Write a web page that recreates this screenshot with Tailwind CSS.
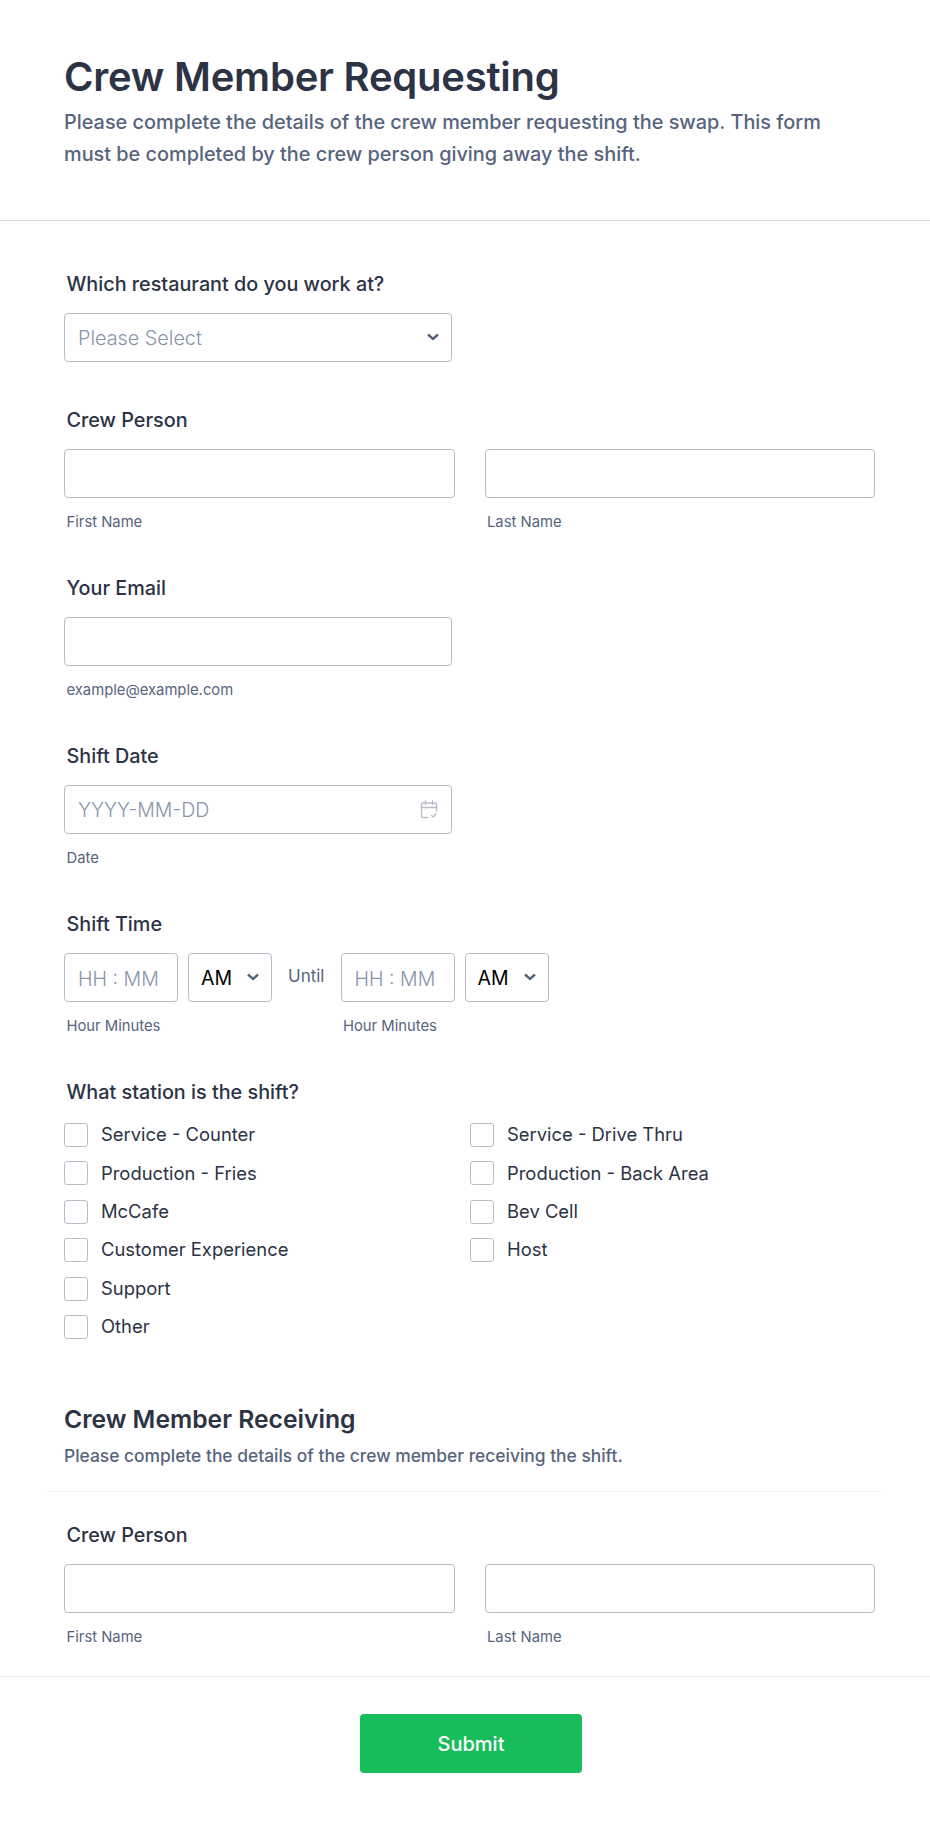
<!DOCTYPE html>
<html lang="en">
<head>
  <meta charset="UTF-8" />
  <meta name="viewport" content="width=device-width, initial-scale=1.0" />
  <title>Crew Member Requesting</title>
  <script src="https://cdn.jsdelivr.net/npm/@tailwindcss/browser@4"></script>
</head>
<body class="bg-white font-[Inter,sans-serif] text-[#2c3345]">

  <!-- Header -->
  <header class="pt-[53px] pb-[50px] px-16 border-b border-[#d8dae4]">
    <h1 class="text-[40px] leading-[48px] font-semibold tracking-[-0.23px]">Crew Member Requesting</h1>
    <p class="mt-[5px] w-[790px] text-[19.86px] leading-8 font-medium text-[#57647e]">Please complete the details of the crew member requesting the swap. This form must be completed by the crew person giving away the shift.</p>
  </header>

  <form class="px-16 pt-[51px]">
    <!-- Restaurant -->
    <label class="block pl-[2.5px] text-[19.8px] leading-6 font-medium">Which restaurant do you work at?</label>
    <div class="relative mt-[17px] w-[388px]">
      <select class="appearance-none block w-full h-[49px] pt-[2px] px-[13px] bg-white border border-[#b8bdc9] rounded text-[19.8px] font-light text-[#8894ab]">
        <option>Please Select</option>
      </select>
      <svg class="absolute right-[13px] top-[20px] w-3 h-2" viewBox="0 0 12 8" fill="none" stroke="#57647e" stroke-width="2.4"><path d="M1 1.5l5 4.5 5-4.5" /></svg>
    </div>

    <!-- Crew person -->
    <label class="block mt-[46px] pl-[2.5px] text-[19.8px] leading-6 font-medium">Crew Person</label>
    <div class="mt-[17px] flex gap-[30px] w-[811px]">
      <div class="flex-1">
        <input type="text" class="block w-full h-[49px] border border-[#b8bdc9] rounded" />
        <p class="mt-[14px] pl-[2.5px] text-[14.8px] leading-5 text-[#57647e]">First Name</p>
      </div>
      <div class="flex-1">
        <input type="text" class="block w-full h-[49px] border border-[#b8bdc9] rounded" />
        <p class="mt-[14px] pl-[2.5px] text-[14.8px] leading-5 text-[#57647e]">Last Name</p>
      </div>
    </div>

    <!-- Email -->
    <label class="block mt-[44px] pl-[2.5px] text-[19.8px] leading-6 font-medium">Your Email</label>
    <div class="mt-[17px] w-[388px]">
      <input type="email" class="block w-full h-[49px] border border-[#b8bdc9] rounded" />
      <p class="mt-[14px] pl-[2.5px] text-[14.8px] leading-5 text-[#57647e]">example@example.com</p>
    </div>

    <!-- Shift date -->
    <label class="block mt-[44px] pl-[2.5px] text-[19.8px] leading-6 font-medium">Shift Date</label>
    <div class="mt-[17px] w-[388px]">
      <div class="relative">
        <input type="text" placeholder="YYYY-MM-DD" class="block w-full h-[49px] px-[13px] border border-[#b8bdc9] rounded text-[19.5px] font-light placeholder:text-[#8894ab]" />
        <svg class="absolute right-[14px] top-[15px] w-[18px] h-[19px]" viewBox="0 0 18 19" fill="none" stroke="#b8bdc9" stroke-width="1.4" stroke-linecap="round" stroke-linejoin="round">
          <path d="M8 17.5H3A1.5 1.5 0 0 1 1.5 16V4.5A1.5 1.5 0 0 1 3 3h12a1.5 1.5 0 0 1 1.5 1.5V11" />
          <path d="M1.5 7.5h15M5.5 1v3.5M12.5 1v3.5" />
          <path d="M11.5 15.5l1.5 1.5 3-3.2" />
        </svg>
      </div>
      <p class="mt-[14px] pl-[2.5px] text-[14.8px] leading-5 text-[#57647e]">Date</p>
    </div>

    <!-- Shift time -->
    <label class="block mt-[44px] pl-[2.5px] text-[19.8px] leading-6 font-medium">Shift Time</label>
    <div class="mt-[17px] flex">
      <div class="w-[114px]">
        <input type="text" placeholder="HH : MM" class="block w-full h-[49px] pt-[2px] px-[13px] border border-[#b8bdc9] rounded text-[19.6px] font-light placeholder:text-[#8894ab]" />
        <p class="mt-[14px] pl-[2.5px] text-[14.8px] leading-5 whitespace-nowrap text-[#57647e]">Hour Minutes</p>
      </div>
      <div class="relative ml-[10px] w-[84px]">
        <select class="appearance-none block w-full h-[49px] pt-[3px] px-[12px] bg-white border border-[#b8bdc9] rounded text-[19.5px] text-black">
          <option>AM</option>
        </select>
        <svg class="absolute right-[13px] top-[20px] w-3 h-2" viewBox="0 0 12 8" fill="none" stroke="#57647e" stroke-width="2.4"><path d="M1 1.5l5 4.5 5-4.5" /></svg>
      </div>
      <span class="ml-[16px] mr-[16px] mt-[11px] text-[17px] leading-6 text-[#57647e]">Until</span>
      <div class="w-[114px]">
        <input type="text" placeholder="HH : MM" class="block w-full h-[49px] pt-[2px] px-[13px] border border-[#b8bdc9] rounded text-[19.6px] font-light placeholder:text-[#8894ab]" />
        <p class="mt-[14px] pl-[2.5px] text-[14.8px] leading-5 whitespace-nowrap text-[#57647e]">Hour Minutes</p>
      </div>
      <div class="relative ml-[10px] w-[84px]">
        <select class="appearance-none block w-full h-[49px] pt-[3px] px-[12px] bg-white border border-[#b8bdc9] rounded text-[19.5px] text-black">
          <option>AM</option>
        </select>
        <svg class="absolute right-[13px] top-[20px] w-3 h-2" viewBox="0 0 12 8" fill="none" stroke="#57647e" stroke-width="2.4"><path d="M1 1.5l5 4.5 5-4.5" /></svg>
      </div>
    </div>

    <!-- Station -->
    <label class="block mt-[44px] pl-[2.5px] text-[19.8px] leading-6 font-medium">What station is the shift?</label>
    <div class="mt-[19px] flex">
      <div class="w-[406px] flex flex-col gap-[14.4px]">
        <label class="flex items-center gap-[13px] h-6 text-[18.4px]"><input type="checkbox" class="appearance-none w-6 h-6 border border-[#b8bdc9] rounded-[3px]" />Service - Counter</label>
        <label class="flex items-center gap-[13px] h-6 text-[18.4px]"><input type="checkbox" class="appearance-none w-6 h-6 border border-[#b8bdc9] rounded-[3px]" />Production - Fries</label>
        <label class="flex items-center gap-[13px] h-6 text-[18.4px]"><input type="checkbox" class="appearance-none w-6 h-6 border border-[#b8bdc9] rounded-[3px]" />McCafe</label>
        <label class="flex items-center gap-[13px] h-6 text-[18.4px]"><input type="checkbox" class="appearance-none w-6 h-6 border border-[#b8bdc9] rounded-[3px]" />Customer Experience</label>
        <label class="flex items-center gap-[13px] h-6 text-[18.4px]"><input type="checkbox" class="appearance-none w-6 h-6 border border-[#b8bdc9] rounded-[3px]" />Support</label>
        <label class="flex items-center gap-[13px] h-6 text-[18.4px]"><input type="checkbox" class="appearance-none w-6 h-6 border border-[#b8bdc9] rounded-[3px]" />Other</label>
      </div>
      <div class="flex flex-col gap-[14.4px]">
        <label class="flex items-center gap-[13px] h-6 text-[18.4px]"><input type="checkbox" class="appearance-none w-6 h-6 border border-[#b8bdc9] rounded-[3px]" />Service - Drive Thru</label>
        <label class="flex items-center gap-[13px] h-6 text-[18.4px]"><input type="checkbox" class="appearance-none w-6 h-6 border border-[#b8bdc9] rounded-[3px]" />Production - Back Area</label>
        <label class="flex items-center gap-[13px] h-6 text-[18.4px]"><input type="checkbox" class="appearance-none w-6 h-6 border border-[#b8bdc9] rounded-[3px]" />Bev Cell</label>
        <label class="flex items-center gap-[13px] h-6 text-[18.4px]"><input type="checkbox" class="appearance-none w-6 h-6 border border-[#b8bdc9] rounded-[3px]" />Host</label>
      </div>
    </div>

    <!-- Receiving -->
    <h2 class="mt-[64px] text-[24.7px] leading-8 font-semibold">Crew Member Receiving</h2>
    <p class="mt-[9px] text-[17.4px] leading-6 font-medium text-[#57647e]">Please complete the details of the crew member receiving the shift.</p>
    <div class="mt-[23px] -mx-[17px] w-[835px] border-t border-[#f3f3f5]"></div>

    <label class="block mt-[31px] pl-[2.5px] text-[19.8px] leading-6 font-medium">Crew Person</label>
    <div class="mt-[17px] flex gap-[30px] w-[811px]">
      <div class="flex-1">
        <input type="text" class="block w-full h-[49px] border border-[#b8bdc9] rounded" />
        <p class="mt-[14px] pl-[2.5px] text-[14.8px] leading-5 text-[#57647e]">First Name</p>
      </div>
      <div class="flex-1">
        <input type="text" class="block w-full h-[49px] border border-[#b8bdc9] rounded" />
        <p class="mt-[14px] pl-[2.5px] text-[14.8px] leading-5 text-[#57647e]">Last Name</p>
      </div>
    </div>
  </form>

  <!-- Footer -->
  <div class="mt-[29px] pt-[37px] border-t border-[#e3e5f0] flex justify-center">
    <button type="button" class="ml-[12px] pt-[2px] w-[222px] h-[59px] bg-[#18bd5b] rounded text-white text-[20px] font-medium">Submit</button>
  </div>
</body>
</html>
